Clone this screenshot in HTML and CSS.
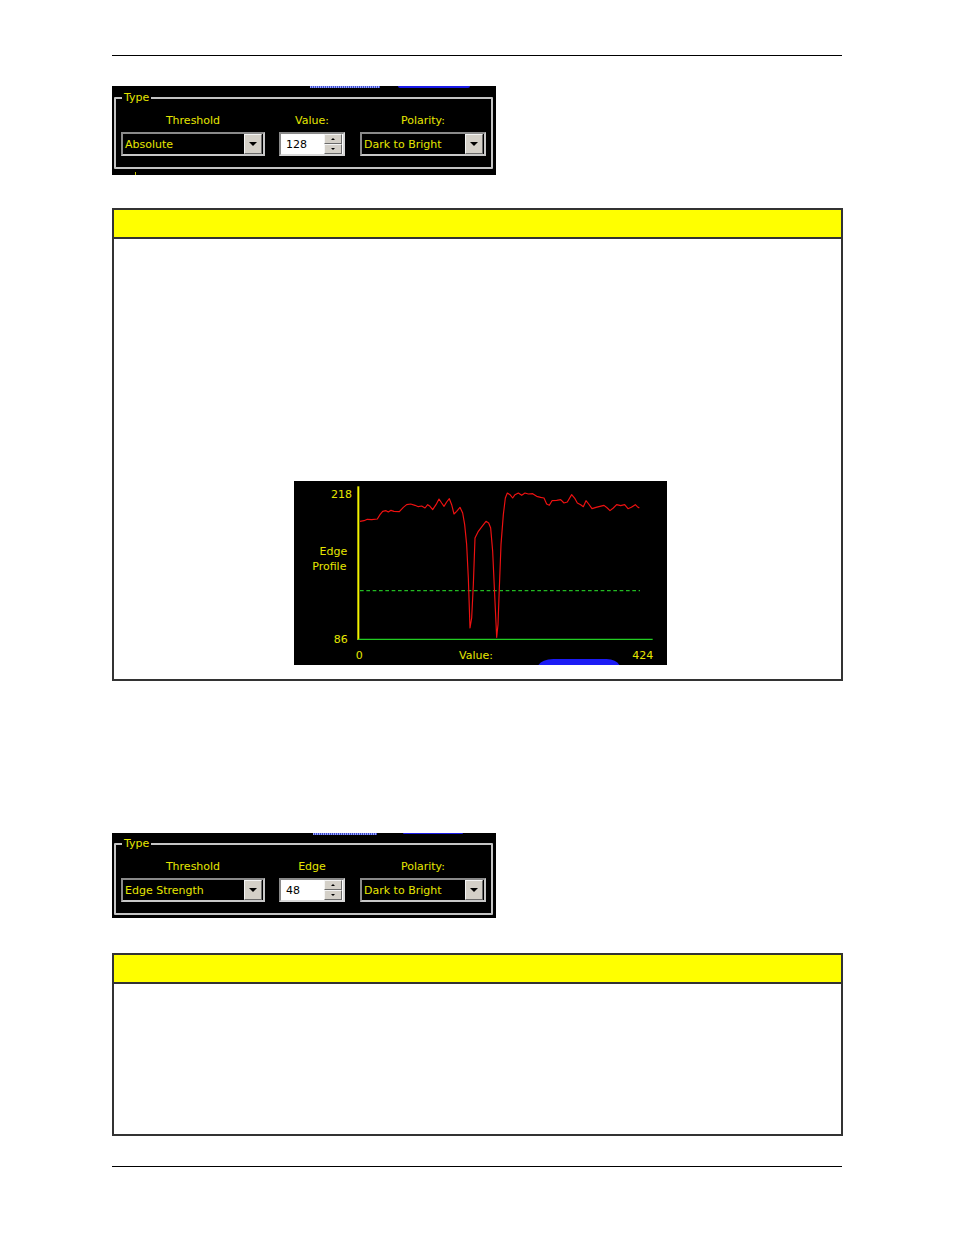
FILE: index.html
```html
<!DOCTYPE html>
<html>
<head>
<meta charset="utf-8">
<link rel="stylesheet" href="styles.css">
</head>
<body>
<div class="page">
  <div class="rule"></div>

  <div class="panel panel-first">
    <div class="strip"><span class="dots dots-a"></span><span class="blue blue-a"></span></div>
    <div class="group">
      <span class="legend">Type</span>
      <div class="row">
        <div class="col col-wide">
          <div class="lbl">Threshold</div>
          <div class="combo"><span class="combo-text">Absolute</span><span class="combo-btn"><span class="tri"></span></span></div>
        </div>
        <div class="col col-spin">
          <div class="lbl">Value:</div>
          <div class="spin"><span class="spin-text">128</span><span class="spin-btns"><span class="sb"><span class="tri-up"></span></span><span class="sb"><span class="tri-dn"></span></span></span></div>
        </div>
        <div class="col col-pol">
          <div class="lbl">Polarity:</div>
          <div class="combo"><span class="combo-text">Dark to Bright</span><span class="combo-btn"><span class="tri"></span></span></div>
        </div>
      </div>
    </div>
    <span class="tick"></span>
  </div>

  <div class="box box-tall">
    <div class="box-head"></div>
    <div class="box-body">
      <div class="chart">
        <svg width="373" height="184" viewBox="12 9 1119 552" xmlns="http://www.w3.org/2000/svg">
          <rect x="12" y="9" width="1119" height="552" fill="#000"/>
          <path d="M740,575 Q744,545 790,543 L950,543 Q988,545 994,575 Z" fill="#1c1cf5"/>
          <line x1="205" y1="25" x2="205" y2="486" stroke="#f4f400" stroke-width="6"/>
          <line x1="205" y1="484" x2="1088" y2="484" stroke="#22cc22" stroke-width="4"/>
          <line x1="210" y1="338" x2="1050" y2="338" stroke="#22bb22" stroke-width="4" stroke-dasharray="11 8"/>
          <path fill="none" stroke="#ee1111" stroke-width="3.5" stroke-linejoin="round" d="M210,130 L222,128 L232,124 L245,125 L262,123 L270,110 L278,100 L288,98 L295,102 L303,97 L312,100 L328,101 L340,88 L350,80 L362,78 L375,82 L385,86 L395,84 L405,90 L413,80 L420,85 L428,95 L438,80 L447,63 L455,75 L462,85 L470,72 L478,62 L485,80 L492,108 L500,100 L510,88 L518,105 L524,140 L530,200 L535,300 L540,450 L545,420 L550,320 L555,180 L565,160 L578,143 L588,130 L596,135 L602,150 L608,220 L614,350 L620,478 L624,440 L628,330 L633,200 L640,110 L646,60 L652,45 L660,50 L668,60 L675,50 L685,45 L695,52 L705,45 L715,48 L728,47 L740,55 L752,58 L762,60 L770,78 L778,82 L786,68 L800,67 L812,65 L822,75 L832,72 L845,50 L855,62 L862,75 L872,80 L880,86 L888,68 L896,78 L906,92 L918,88 L930,85 L942,82 L952,90 L960,98 L970,90 L980,80 L992,83 L1004,80 L1014,92 L1024,88 L1036,80 L1042,86 L1048,90"/>
          <g class="ctext">
            <text x="186" y="59" text-anchor="end">218</text>
            <text x="130" y="231" text-anchor="middle">Edge</text>
            <text x="118" y="275" text-anchor="middle">Profile</text>
            <text x="173" y="494" text-anchor="end">86</text>
            <text x="197" y="544">0</text>
            <text x="507" y="544">Value:</text>
            <text x="1090" y="544" text-anchor="end">424</text>
          </g>
        </svg>
      </div>
    </div>
  </div>

  <div class="panel panel-second">
    <div class="strip"><span class="dots dots-b"></span><span class="blue blue-b"></span></div>
    <div class="group">
      <span class="legend">Type</span>
      <div class="row">
        <div class="col col-wide">
          <div class="lbl">Threshold</div>
          <div class="combo"><span class="combo-text">Edge Strength</span><span class="combo-btn"><span class="tri"></span></span></div>
        </div>
        <div class="col col-spin">
          <div class="lbl">Edge</div>
          <div class="spin"><span class="spin-text">48</span><span class="spin-btns"><span class="sb"><span class="tri-up"></span></span><span class="sb"><span class="tri-dn"></span></span></span></div>
        </div>
        <div class="col col-pol">
          <div class="lbl">Polarity:</div>
          <div class="combo"><span class="combo-text">Dark to Bright</span><span class="combo-btn"><span class="tri"></span></span></div>
        </div>
      </div>
    </div>
  </div>

  <div class="box box-short">
    <div class="box-head"></div>
    <div class="box-body"></div>
  </div>

  <div class="rule rule-bottom"></div>
</div>
</body>
</html>
```

FILE: styles.css
```css
html, body {
  margin: 0;
  padding: 0;
  background: #fff;
}

body {
  font-family: "DejaVu Sans", Verdana, sans-serif;
  font-size: 11px;
}

.page {
  margin-left: 112px;
  width: 731px;
  padding-top: 55px;
}

.rule {
  height: 1px;
  background: #000;
  width: 730px;
}

.rule-bottom {
  margin-top: 30px;
}

/* dialog panels */
.panel {
  position: relative;
  width: 384px;
  box-sizing: border-box;
  background: #000;
  padding: 0 3px 0 2px;
  display: flex;
  flex-direction: column;
}

.panel-first {
  margin-top: 30px;
  height: 89px;
}

.panel-second {
  margin-top: 152px;
  height: 85px;
}

.strip {
  height: 2px;
  display: flex;
}

.dots {
  height: 2px;
  background: repeating-linear-gradient(90deg, #9aa6ff 0 1px, #3a48c8 1px 2px);
}

.blue {
  height: 2px;
  background: #1a1ae8;
  border-radius: 0 0 2px 2px;
}

.dots-a { margin-left: 196px; width: 70px; }
.blue-a { margin-left: 18px; width: 72px; }
.dots-b { margin-left: 199px; width: 64px; }
.blue-b { margin-left: 26px; width: 60px; height: 1px; }

.panel-first .group { margin-top: 9px; }
.panel-second .group { margin-top: 8px; }

.group {
  position: relative;
  border: 2px solid #c4c4c4;
  border-radius: 1px;
  padding: 15px 5px 11px 5px;
}

.legend {
  position: absolute;
  top: -8px;
  left: 6px;
  padding: 0 2px;
  background: #000;
  color: #e6e600;
  line-height: 14px;
}

.tick {
  position: absolute;
  left: 23px;
  bottom: 0;
  width: 1px;
  height: 3px;
  background: #c8c800;
}

.row {
  display: flex;
  gap: 14px;
}

.col {
  display: flex;
  flex-direction: column;
  align-items: center;
  gap: 4px;
}

.col-wide { width: 144px; }
.col-spin { width: 66px; margin-right: 1px; }
.col-pol { width: 126px; }

.lbl {
  color: #e6e600;
  line-height: 14px;
  white-space: nowrap;
}

.combo {
  width: 100%;
  height: 24px;
  box-sizing: border-box;
  border: 2px solid;
  border-color: #8a8a8a #c8c8c8 #c8c8c8 #8a8a8a;
  background: #000;
  display: flex;
  align-items: center;
  justify-content: space-between;
  padding: 0 1px 0 2px;
}

.combo-text {
  color: #e6e600;
  white-space: nowrap;
}

.combo-btn {
  width: 18px;
  height: 20px;
  box-sizing: border-box;
  background: #d4d0c8;
  border: 1px solid;
  border-color: #f4f4f4 #6a6a6a #6a6a6a #f4f4f4;
  display: flex;
  align-items: center;
  justify-content: center;
}

.tri {
  width: 0;
  height: 0;
  border-left: 4px solid transparent;
  border-right: 4px solid transparent;
  border-top: 4px solid #000;
}

.spin {
  width: 100%;
  height: 24px;
  box-sizing: border-box;
  border: 2px solid;
  border-color: #8a8a8a #d8d8d8 #d8d8d8 #8a8a8a;
  background: #fff;
  display: flex;
  align-items: center;
  justify-content: space-between;
  padding: 0 1px 0 5px;
}

.spin-text {
  color: #000;
}

.spin-btns {
  width: 18px;
  height: 20px;
  display: flex;
  flex-direction: column;
}

.sb {
  flex: 1;
  box-sizing: border-box;
  background: #d4d0c8;
  border: 1px solid;
  border-color: #f4f4f4 #6a6a6a #6a6a6a #f4f4f4;
  display: flex;
  align-items: center;
  justify-content: center;
}

.tri-up {
  width: 0;
  height: 0;
  border-left: 2px solid transparent;
  border-right: 2px solid transparent;
  border-bottom: 2px solid #000;
}

.tri-dn {
  width: 0;
  height: 0;
  border-left: 2px solid transparent;
  border-right: 2px solid transparent;
  border-top: 2px solid #000;
}

/* yellow-headed boxes */
.box {
  width: 731px;
  box-sizing: border-box;
  border: 2px solid #333;
  display: flex;
  flex-direction: column;
  background: #fff;
}

.box-tall {
  margin-top: 33px;
  height: 473px;
}

.box-short {
  margin-top: 35px;
  height: 183px;
}

.box-head {
  height: 27px;
  background: #ffff00;
  border-bottom: 2px solid #333;
  flex: none;
}

.box-body {
  flex: 1;
  display: flex;
  flex-direction: column;
  justify-content: flex-end;
  align-items: center;
  padding: 0 0 14px 6px;
}

.chart {
  width: 373px;
  height: 184px;
  line-height: 0;
}

.ctext text {
  font-family: "DejaVu Sans", Verdana, sans-serif;
  font-size: 33px;
  fill: #e6e600;
}
```
